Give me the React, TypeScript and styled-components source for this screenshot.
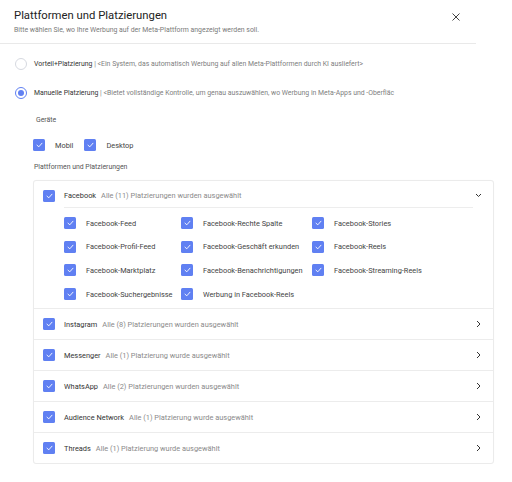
import React from "react";
import styled, { createGlobalStyle } from "styled-components";

const Global = createGlobalStyle`
  html, body { margin: 0; padding: 0; background: #fff; }
  body { font-family: Roboto, "Noto Sans", Arial, sans-serif; color: #333; }
  * { box-sizing: border-box; }
`;

const ACCENT = "#6080f2";

const Dialog = styled.div`
  width: 476px;
  background: #fff;
`;

const Header = styled.div`
  display: flex;
  justify-content: space-between;
  align-items: flex-start;
  padding: 9px 14px 8px 14px;
  border-bottom: 1px solid #e9e9e9;
`;

const Titles = styled.div`
  display: flex;
  flex-direction: column;
  gap: 3px;
`;

const Title = styled.h1`
  margin: 0;
  font-size: 11.3px;
  line-height: 14px;
  font-weight: 400;
  color: #222;
`;

const Subtitle = styled.p`
  margin: 0;
  font-size: 6.9px;
  line-height: 9px;
  color: #7a7a7a;
`;

const CloseButton = styled.button`
  border: none;
  background: none;
  padding: 0;
  margin: 2px 0 0 0;
  width: 12px;
  height: 12px;
  display: flex;
  align-items: center;
  justify-content: center;
  color: #444;
`;

const Body = styled.div`
  padding: 13px 0 0 15px;
  display: flex;
  flex-direction: column;
`;

const RadioRow = styled.label<{ $gap?: number }>`
  display: flex;
  align-items: center;
  gap: 7px;
  height: 14px;
  margin-bottom: ${(p) => p.$gap ?? 0}px;
  font-size: 6.9px;
  color: #808080;
  white-space: nowrap;
  overflow: hidden;
`;

const Radio = styled.span<{ $on?: boolean }>`
  flex: none;
  width: 12px;
  height: 12px;
  border-radius: 50%;
  border: 1px solid ${(p) => (p.$on ? ACCENT : "#d6d9e0")};
  display: flex;
  align-items: center;
  justify-content: center;
  &::after {
    content: "";
    width: 6px;
    height: 6px;
    border-radius: 50%;
    background: ${(p) => (p.$on ? ACCENT : "transparent")};
  }
`;

const RadioName = styled.span`
  color: #333;
`;

const Section = styled.div`
  padding-left: 18px;
  display: flex;
  flex-direction: column;
  width: 479px;
`;

const SectionLabel = styled.div<{ $indent?: number }>`
  font-size: 6.9px;
  line-height: 10px;
  color: #555;
  padding-left: ${(p) => p.$indent ?? 0}px;
`;

const DeviceRow = styled.div`
  display: flex;
  align-items: center;
  gap: 10px;
  height: 12px;
  margin: 14px 0 11px 0;
`;

const CheckItem = styled.label`
  display: flex;
  align-items: center;
  gap: 10px;
  font-size: 7.4px;
  color: #444;
  white-space: nowrap;
  margin-right: 1px;
`;

const Box = styled.span`
  flex: none;
  width: 12px;
  height: 12px;
  border-radius: 1.5px;
  background: ${ACCENT};
  display: flex;
  align-items: center;
  justify-content: center;
`;

const Card = styled.div`
  margin-top: 8px;
  border: 1px solid #ebebeb;
  border-radius: 3px;
  box-shadow: 0 0 1px rgba(0, 0, 0, 0.04);
  background: #fff;
`;

const Group = styled.div`
  border-top: 1px solid #ececec;
  &:first-child { border-top: none; }
`;

const GroupHead = styled.div<{ $open?: boolean }>`
  display: flex;
  align-items: center;
  height: ${(p) => (p.$open ? 26 : 30)}px;
  padding: ${(p) => (p.$open ? "3px 0 0 0" : "0")};
  padding-left: 9px;
  padding-right: 11px;
  gap: 9px;
`;

const GroupText = styled.div`
  flex: 1;
  display: flex;
  align-items: center;
  gap: 5px;
  font-size: 7.4px;
  white-space: nowrap;
`;

const GroupName = styled.span`
  color: #333;
`;

const GroupInfo = styled.span`
  color: #8a8a8a;
`;

const Chevron = styled.span`
  width: 8px;
  height: 8px;
  display: flex;
  align-items: center;
  justify-content: center;
`;

const SubArea = styled.div`
  margin: 0 20px 0 30px;
  border-top: 1px solid #ededed;
  padding: 9px 0 8px 0;
  display: grid;
  grid-template-columns: 117px 131px 1fr;
  row-gap: 11.7px;
`;

const Tick = () => (
  <svg width="7" height="6" viewBox="0 0 7 6">
    <path d="M1 3.2 L2.8 4.8 L6 1.2" fill="none" stroke="#fff" strokeWidth="0.9" strokeLinecap="round" strokeLinejoin="round" />
  </svg>
);

const Check = ({ label }: { label: string }) => (
  <CheckItem>
    <Box>
      <Tick />
    </Box>
    {label}
  </CheckItem>
);

const ChevronDown = () => (
  <svg width="7" height="5" viewBox="0 0 7 5">
    <path d="M1 1 L3.5 3.5 L6 1" fill="none" stroke="#333" strokeWidth="1" />
  </svg>
);

const ChevronRight = () => (
  <svg width="5" height="8" viewBox="0 0 5 8">
    <path d="M1 1 L4 4 L1 7" fill="none" stroke="#333" strokeWidth="1" />
  </svg>
);

const facebookPlacements = [
  "Facebook-Feed",
  "Facebook-Rechte Spalte",
  "Facebook-Stories",
  "Facebook-Profil-Feed",
  "Facebook-Geschäft erkunden",
  "Facebook-Reels",
  "Facebook-Marktplatz",
  "Facebook-Benachrichtigungen",
  "Facebook-Streaming-Reels",
  "Facebook-Suchergebnisse",
  "Werbung in Facebook-Reels",
];

const platforms = [
  { name: "Instagram", info: "Alle (8) Platzierungen wurden ausgewählt" },
  { name: "Messenger", info: "Alle (1) Platzierung wurde ausgewählt" },
  { name: "WhatsApp", info: "Alle (2) Platzierungen wurden ausgewählt" },
  { name: "Audience Network", info: "Alle (1) Platzierung wurde ausgewählt" },
  { name: "Threads", info: "Alle (1) Platzierung wurde ausgewählt" },
];

export default function App() {
  return (
    <>
      <Global />
      <Dialog>
        <Header>
          <Titles>
            <Title>Plattformen und Platzierungen</Title>
            <Subtitle>Bitte wählen Sie, wo Ihre Werbung auf der Meta-Plattform angezeigt werden soll.</Subtitle>
          </Titles>
          <CloseButton aria-label="Schließen">
            <svg width="8" height="8" viewBox="0 0 8 8">
              <path d="M0.5 0.5 L7.5 7.5 M7.5 0.5 L0.5 7.5" stroke="#444" strokeWidth="1" />
            </svg>
          </CloseButton>
        </Header>
        <Body>
          <RadioRow $gap={15}>
            <Radio />
            <span>
              <RadioName>Vorteil+Platzierung</RadioName> | &lt;Ein System, das automatisch Werbung auf allen Meta-Plattformen durch KI ausliefert&gt;
            </span>
          </RadioRow>
          <RadioRow $gap={15}>
            <Radio $on />
            <span>
              <RadioName>Manuelle Platzierung</RadioName> | &lt;Bietet vollständige Kontrolle, um genau auszuwählen, wo Werbung in Meta-Apps und -Oberfläc
            </span>
          </RadioRow>
          <Section>
            <SectionLabel $indent={3}>Geräte</SectionLabel>
            <DeviceRow>
              <Check label="Mobil" />
              <Check label="Desktop" />
            </DeviceRow>
            <SectionLabel $indent={1}>Plattformen und Platzierungen</SectionLabel>
            <Card>
              <Group>
                <GroupHead $open>
                  <Box>
                    <Tick />
                  </Box>
                  <GroupText>
                    <GroupName>Facebook</GroupName>
                    <GroupInfo>Alle (11) Platzierungen wurden ausgewählt</GroupInfo>
                  </GroupText>
                  <Chevron>
                    <ChevronDown />
                  </Chevron>
                </GroupHead>
                <SubArea>
                  {facebookPlacements.map((p) => (
                    <Check key={p} label={p} />
                  ))}
                </SubArea>
              </Group>
              {platforms.map((p) => (
                <Group key={p.name}>
                  <GroupHead>
                    <Box>
                      <Tick />
                    </Box>
                    <GroupText>
                      <GroupName>{p.name}</GroupName>
                      <GroupInfo>{p.info}</GroupInfo>
                    </GroupText>
                    <Chevron>
                      <ChevronRight />
                    </Chevron>
                  </GroupHead>
                </Group>
              ))}
            </Card>
          </Section>
        </Body>
      </Dialog>
    </>
  );
}
